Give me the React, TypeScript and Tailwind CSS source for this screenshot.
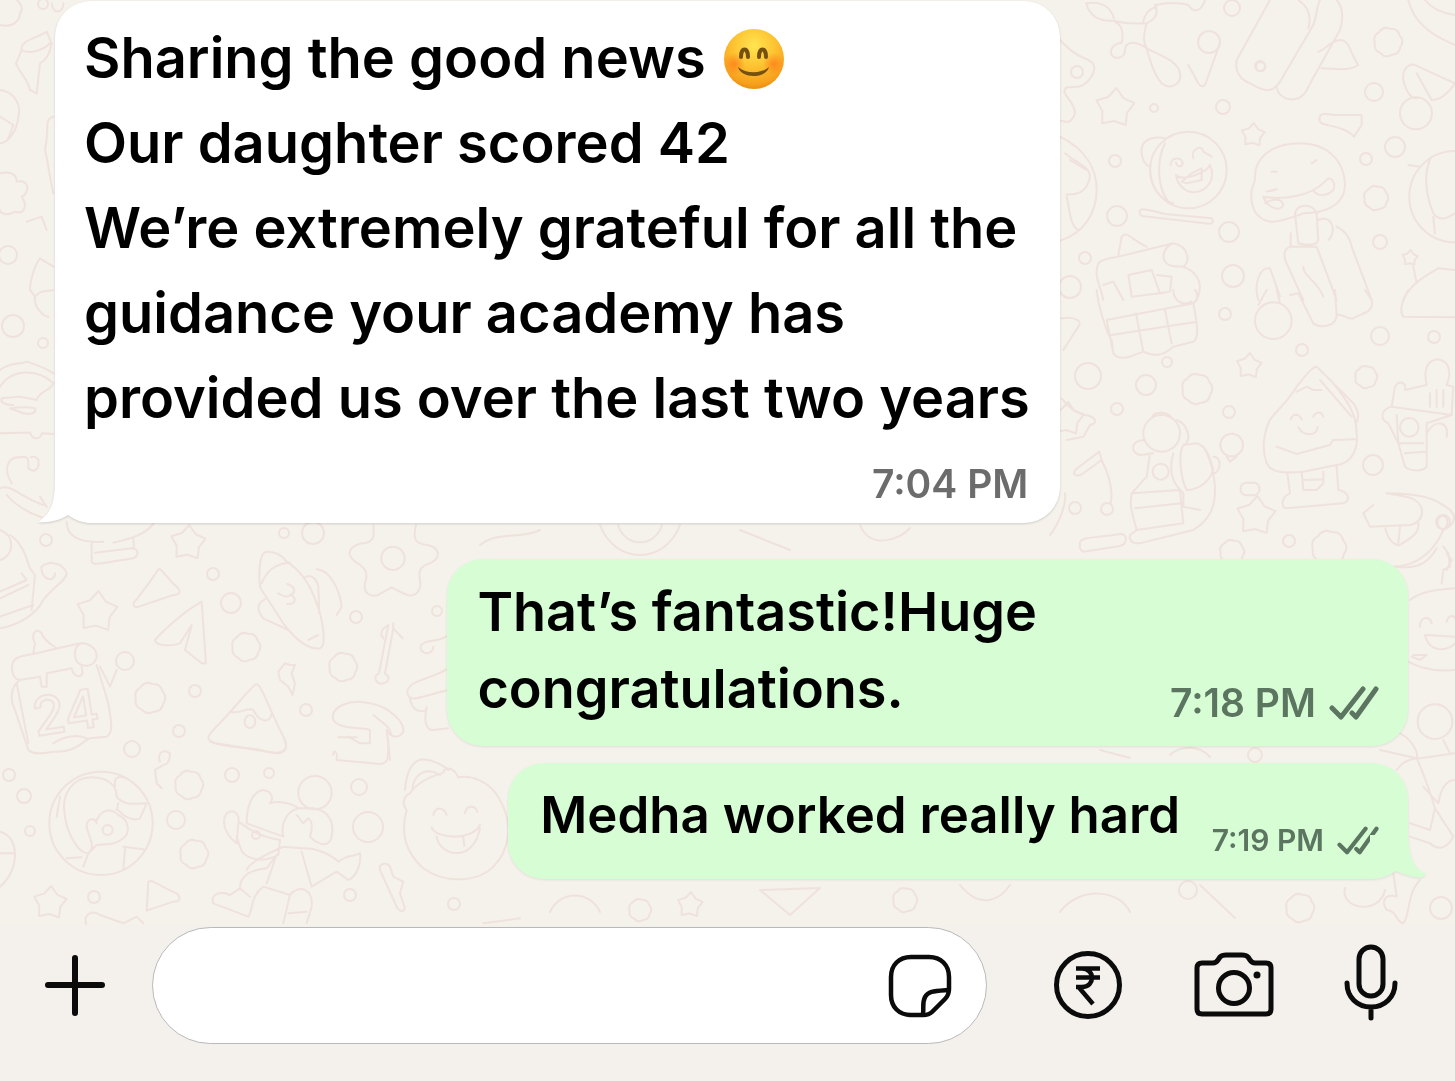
import type { ReactNode } from "react";

// small round doodles: [x, y, radius]
const dots: [number, number, number][] = [
  [1232, 8, 8], [1209, 42, 11], [1374, 92, 9], [1395, 147, 10], [1117, 216, 10],
  [1229, 232, 10], [1233, 276, 11], [1154, 108, 4], [1223, 107, 7], [1380, 242, 7],
  [1366, 159, 6], [1115, 161, 6], [1085, 258, 6], [1070, 287, 11], [1260, 66, 5],
  [1077, 72, 6], [1225, 314, 6], [1380, 336, 9], [1434, 337, 6], [1302, 350, 6],
  [1088, 376, 13], [1146, 385, 10], [1167, 362, 5], [1117, 409, 6], [1229, 412, 6],
  [1373, 465, 10], [1289, 541, 6], [1075, 508, 6], [1107, 509, 6], [1443, 522, 7],
  [46, 540, 6], [213, 574, 6], [231, 603, 10], [284, 533, 5], [313, 533, 11],
  [356, 617, 6], [195, 691, 6], [306, 710, 6], [179, 731, 6], [132, 749, 8],
  [125, 661, 9], [437, 611, 5], [9, 775, 6], [24, 796, 7], [30, 831, 5],
  [176, 820, 9], [232, 775, 7], [269, 773, 5], [359, 787, 8], [94, 897, 6],
  [350, 895, 6], [454, 904, 6], [8, 255, 9], [13, 326, 11], [43, 343, 5],
  [43, 4, 5], [368, 827, 15], [1441, 908, 11], [1255, 755, 7], [1188, 890, 9],
];

// bumpy, flower-like dots: [x, y, radius]
const blobs: [number, number, number][] = [
  [1388, 42, 14], [1376, 198, 12], [1197, 389, 15], [1366, 377, 11], [246, 647, 14],
  [150, 698, 15], [343, 667, 14], [189, 785, 14], [194, 854, 14], [1329, 548, 17],
  [1232, 552, 12], [640, 910, 11], [905, 900, 12], [1300, 908, 14],
];

// five-pointed stars: [x, y, radius]
const stars: [number, number, number][] = [
  [97, 612, 21], [50, 903, 17], [1115, 108, 20], [1253, 135, 12], [1249, 366, 13],
  [188, 543, 18], [1256, 516, 20], [1410, 258, 8], [690, 905, 13], [1067, 419, 17],
];

const blobPath = (cx: number, cy: number, r: number) => {
  const n = 7;
  const pt = (i: number, k: number) => {
    const a = (i / n) * Math.PI * 2 - 1.4;
    return `${cx + Math.cos(a) * r * k} ${cy + Math.sin(a) * r * k}`;
  };
  let d = `M${pt(0, 0.95)}`;
  for (let i = 0; i < n; i++) {
    d += `Q${pt(i + 0.5, 1.2)} ${pt(i + 1, 0.95)}`;
  }
  return d + "Z";
};

const starPath = (cx: number, cy: number, r: number) => {
  const pts = Array.from({ length: 10 }, (_, i) => {
    const a = (i / 10) * Math.PI * 2 - 1.5;
    const k = i % 2 ? 0.65 : 1;
    return `${cx + Math.cos(a) * r * k} ${cy + Math.sin(a) * r * k}`;
  });
  return `M${pts.join("L")}Z`;
};

function Wallpaper() {
  return (
    <svg
      className="absolute inset-0 h-full w-full"
      viewBox="0 0 1455 925"
      preserveAspectRatio="xMinYMin slice"
      fill="none"
      stroke="#efe2dc"
      strokeWidth="2"
      strokeLinecap="round"
      strokeLinejoin="round"
      aria-hidden="true"
    >
      {dots.map(([x, y, r]) => (
        <circle key={`${x}-${y}`} cx={x} cy={y} r={r} />
      ))}
      {blobs.map(([x, y, r]) => (
        <path key={`${x}-${y}`} d={blobPath(x, y, r)} />
      ))}
      {stars.map(([x, y, r]) => (
        <path key={`${x}-${y}`} d={starPath(x, y, r)} />
      ))}

      {/* top right: bone, phone, coin face, mushroom, globe */}
      <g transform="translate(1050 0) scale(.3333)" strokeWidth="6">
        <path d="M108 10C120 50 150 65 190 62C215 75 222 90 215 128C190 130 178 150 185 165C195 180 225 175 225 150C225 125 255 120 290 145C300 180 310 220 335 250C360 270 395 255 390 220C385 185 340 170 290 145C275 120 285 90 290 70C320 55 325 40 315 15C350 8 390 8 415 15C430 40 455 35 465 0M190 62C240 75 270 70 290 70M110 10C140 5 180 10 192 55M280 65C285 40 300 25 320 20" />
        <path d="M415 195L445 250C452 262 462 262 467 250L508 135M30 120C60 150 75 165 115 180C135 190 140 210 120 235C105 262 80 262 50 262C25 280 75 300 75 340C65 370 50 368 32 362" />
        <path d="M660 0L560 180C555 210 565 235 600 250C650 280 670 275 690 245L790 75C800 50 800 20 810 0M745 0C775 20 785 50 775 85M680 262C685 290 715 305 745 295C770 285 775 255 800 215L870 90C880 60 880 20 860 0M805 155C825 150 845 120 870 120C900 120 900 160 925 195C900 215 850 205 815 205" />
        <circle cx="632" cy="200" r="14" />
        <path d="M1075 0C1090 60 1130 100 1215 135M1125 0C1145 25 1170 40 1215 45M1060 240C1055 200 1085 185 1105 200L1215 250C1195 280 1170 300 1145 300L1100 220M1060 240C1070 280 1085 295 1100 295" />
        <circle cx="1098" cy="340" r="48" />
        <path d="M810 350C810 340 830 340 850 345L935 345L935 375L912 410C890 385 850 380 820 372C808 368 806 360 810 350Z" />
        <circle cx="415" cy="510" r="115" />
        <path d="M345 415C300 405 270 425 275 460C280 490 290 495 300 500C300 560 330 600 370 610M345 430C320 480 320 560 355 605M362 495C362 470 398 470 398 490C395 505 380 500 378 488M430 475C420 450 455 430 460 455L485 470M378 525C395 545 470 520 480 495C500 540 470 575 430 577C400 575 382 550 378 525ZM395 545L425 520L455 505L455 540L410 550Z" />
        <path d="M275 628C300 628 330 640 345 642L485 655C495 665 485 675 465 670L275 648C265 640 268 630 275 628Z" />
        <path d="M615 540C610 470 670 430 750 430C830 430 885 480 885 560C880 620 820 640 760 640C730 650 690 668 660 665C610 655 600 610 605 570ZM640 590C650 620 690 640 700 615C695 590 660 600 645 610M640 590C700 600 780 590 825 545C840 520 860 550 850 570C830 590 800 590 790 570M785 490L800 480M665 515L680 515M650 575L680 568" />
        <path d="M735 640C740 610 790 610 800 640L805 720C800 740 760 735 745 730ZM805 660C850 640 860 700 835 720M722 700L722 740C700 745 700 770 710 790L760 900M722 740L800 740L860 900M860 680C880 690 900 710 905 740L965 900M760 800C760 830 800 840 820 890" />
        <path d="M30 410C110 450 140 510 140 570C140 640 100 700 30 722M45 460C80 490 120 500 120 530C110 580 80 585 50 583M60 480L110 510M50 590C60 630 60 680 85 690" />
        <circle cx="1215" cy="590" r="137" />
        <path d="M1140 480C1120 530 1130 590 1150 640C1170 670 1200 650 1215 640M1075 495L1110 500M1150 650L1155 700" />
        <path d="M205 765L215 710C230 690 245 720 290 740M145 790C160 775 180 775 205 770L370 730C420 740 420 790 400 800C370 800 340 800 340 765C345 745 355 735 370 730M145 790C130 830 150 850 160 900M235 825L305 810L330 880L245 890ZM320 825L365 830L360 875L330 880M400 800C450 820 460 860 440 900M160 855L190 845L220 900" />
        <path d="M625 900C610 850 630 800 660 805L690 890M1060 900C1080 850 1140 820 1165 805L1215 810M1090 800L1100 850" />
      </g>

      {/* right: calendar grid, backpack kid, rice ball, robot */}
      <g transform="translate(1050 290) scale(.3333)" strokeWidth="6">
        <path d="M140 0C145 50 170 130 185 150L190 190C200 205 220 205 240 200L280 185C310 200 340 200 370 170L430 155C450 145 440 90 430 40L170 90L190 190M185 135L440 95M258 70L280 185M345 60L365 160M430 40C445 30 445 10 435 0M370 0C370 30 395 50 425 35" />
        <circle cx="670" cy="92" r="55" />
        <path d="M625 45L650 0M690 40L680 0M720 15L745 10L790 100C810 115 860 110 860 75C880 70 890 90 910 85C930 70 975 70 965 30L945 0M860 75L855 0M1075 0C1060 30 1045 60 1060 80L1215 82M35 85C70 80 100 90 85 110L40 180" />
        <path d="M800 230C790 230 780 240 740 290C710 340 680 360 660 390C640 430 635 480 650 520C665 550 700 550 760 545L860 525C910 520 925 470 920 430C920 370 890 330 850 280ZM800 230L910 340C925 360 930 380 918 400M810 270L905 380M740 305L770 290L790 300L815 300M722 388C730 370 745 370 755 388M790 380C800 362 815 365 820 380M745 412C760 440 800 440 803 412M680 470L740 492L840 465L850 450L915 448" />
        <path d="M712 548L720 610C695 620 690 650 710 655L880 640C905 630 895 605 865 600L860 530M755 545L760 600L800 600L820 580L820 545M760 570L820 568" />
        <circle cx="335" cy="430" r="55" />
        <path d="M305 385C310 360 360 365 365 385M285 450C240 450 240 490 270 495L310 490M380 390C410 400 430 450 400 465C385 490 390 560 410 600C450 600 480 570 490 540C480 500 470 470 440 460L400 465M300 490L290 560L245 610C240 640 240 650 260 720L240 735C235 760 260 765 290 755L430 720C480 690 495 650 495 600C495 560 480 500 460 470M245 610L390 600L400 700L260 720M255 655L395 640M370 490C350 560 380 590 400 610L400 650L450 660M490 500C520 500 510 550 490 550" />
        <circle cx="332" cy="545" r="24" />
        <circle cx="545" cy="465" r="34" />
        <path d="M530 500L540 515L560 500M75 540C65 560 85 560 100 550L155 510L148 485L75 540M155 510C180 560 190 600 182 640M35 325C60 360 80 365 105 375C140 380 145 400 120 405L100 440L50 450M90 765C85 740 120 745 215 732C235 735 230 765 210 768L100 785C90 780 88 770 90 765Z" />
        <rect x="572" y="578" width="56" height="38" rx="17" />
        <path d="M1025 350L1035 290C1045 270 1070 275 1065 300L1130 285C1120 240 1130 210 1165 208C1200 215 1205 250 1190 285L1210 290L1205 375L1025 350C990 360 990 390 1015 400L1045 460L1065 530C1080 545 1120 545 1130 530L1130 400L1205 375M1040 375L1045 460L1120 460M1130 430C1160 380 1200 400 1190 440M1065 490L1125 485M1140 310L1140 350M1160 300L1160 350M1180 300L1180 350" />
        <circle cx="1078" cy="412" r="28" />
        <path d="M970 645L940 670L960 710L1080 705C1120 700 1140 640 1070 620L1010 610C1090 610 1140 620 1170 640C1230 670 1220 700 1180 720C1160 770 1110 830 1030 830M1005 710C1010 740 1030 770 1050 765C1080 745 1110 730 1105 700M1050 710L1045 760M1190 790L1205 810L1190 840" />
        <ellipse cx="1178" cy="697" rx="15" ry="20" />
        <path d="M45 610C50 650 20 710 0 735" />
      </g>

      {/* left: 24 calendar, paper plane, rocket, gear flower, pizza */}
      <g transform="translate(0 510) scale(.3333)" strokeWidth="6">
        <path d="M200 35C200 80 240 100 310 95M340 98C400 85 440 70 460 40M275 95L275 155C280 168 300 160 400 145C420 135 415 115 395 115L285 128M400 85L402 115" />
        <path d="M0 60C50 80 40 140 0 150M30 75C70 100 80 150 90 175L105 195L95 300M0 245L80 210L65 190M0 320L100 285M0 355C60 345 110 310 130 270C160 230 200 210 200 190C190 160 150 150 125 170C120 210 165 220 165 190M0 265L85 225" />
        <path d="M475 178C485 172 495 200 530 230C545 245 540 255 520 255L410 292C395 290 400 275 410 268L450 215ZM605 275C560 300 500 350 465 390C465 410 520 408 540 400L575 345L555 420L605 460L618 460Z" />
        <path d="M780 230C775 180 780 125 800 125C830 125 850 140 860 155C900 180 930 220 950 280C970 330 980 410 960 415C920 420 880 380 850 340L785 240ZM785 220C800 180 830 160 870 158M795 268C770 280 770 300 790 325L865 360M912 205C925 190 950 200 955 230L958 310M950 178C990 180 1020 240 1025 290L1010 315M925 390L955 375" />
        <path d="M862 222C888 230 888 250 870 255M835 250C850 262 865 262 870 255C892 262 888 285 862 282" />
        <path d="M1120 45C1125 80 1120 100 1085 100C1050 110 1035 130 1065 155C1100 175 1105 190 1095 220C1090 250 1110 262 1135 255L1175 232L1220 255C1250 262 1265 240 1260 210C1255 180 1260 170 1290 160C1330 140 1315 110 1280 105C1240 100 1240 80 1248 45" />
        <circle cx="1179" cy="145" r="35" />
        <path d="M1165 345L1137 490C1115 500 1130 525 1150 520C1170 515 1170 500 1155 490L1180 355L1208 385M1165 345C1140 360 1140 375 1150 385M1180 340L1180 360" />
        <path d="M765 525C740 545 700 600 640 660C615 685 625 695 650 700L830 730C860 730 865 710 850 680C820 620 800 570 785 540C775 522 770 520 765 525ZM690 605C720 615 740 590 760 600C780 640 810 640 815 610" />
        <ellipse cx="750" cy="635" rx="16" ry="19" />
        <path d="M870 465L885 465L875 490L885 520L878 555L865 530L840 510L835 485L855 460Z" />
        <path d="M40 455C45 440 70 438 100 432L230 402C260 395 290 410 290 440C285 470 250 475 230 455C220 430 225 410 240 402M40 455C30 480 40 510 60 510L120 500L125 530L140 530L140 490L215 475C220 500 240 505 248 490L245 470M60 510C30 530 30 570 45 600L85 720C100 735 130 730 160 725C230 730 250 690 270 685L320 680C340 670 335 640 325 580L290 465M50 520L85 700M160 700C190 680 230 670 260 685M100 430L105 400C90 370 110 350 125 370C130 390 150 400 170 415M300 470L330 530L350 480" />
        <path d="M1000 630C990 590 1050 565 1110 580C1170 590 1215 640 1210 665C1195 690 1170 680 1160 660L1170 750M1000 630C1020 660 1080 650 1110 660L1110 700L1080 700L1045 680M1015 682L1070 682M1120 615C1150 640 1170 650 1175 675M1345 475C1290 510 1220 510 1222 550C1230 580 1260 560 1345 540M1230 565C1235 600 1260 610 1280 600M1280 590C1270 640 1280 660 1300 660L1345 655M1345 375C1320 400 1260 385 1262 415C1270 440 1300 430 1300 410" />
        <text x="95" y="665" transform="rotate(-9 190 600)" fontSize="160" className="font-['Inter',sans-serif] font-medium">24</text>
      </g>

      {/* bottom left: globe, running kid, laughing face */}
      <g transform="translate(0 740) scale(.3333)" strokeWidth="6">
        <circle cx="303" cy="250" r="155" />
        <path d="M195 230C180 160 220 110 280 112C330 115 350 140 350 170C370 200 420 190 440 190L420 235C400 245 370 230 355 210M195 230C200 270 230 340 265 340C290 320 265 290 260 260C260 230 290 235 290 250M290 240C310 200 340 210 355 225C390 240 390 280 370 295C340 320 310 310 290 315L265 340L250 380M370 320L430 328M345 140C340 110 360 105 380 115M355 190L350 210M200 355L245 352M375 325L370 390M180 170L170 230" />
        <circle cx="323" cy="270" r="15" />
        <path d="M480 65C470 40 490 25 510 40C510 65 500 75 490 75L465 90L470 130L485 145M445 425C455 415 480 440 530 460C545 475 540 485 520 485L440 512ZM258 552C250 520 280 510 300 525L370 550L410 530L430 550" />
        <circle cx="945" cy="158" r="50" />
        <path d="M740 250C740 200 755 155 790 150C820 155 820 180 810 190C830 180 880 190 895 205C860 215 840 250 850 290L740 250ZM895 205L940 205C980 210 1005 240 995 290C990 320 960 320 930 290C940 260 935 240 925 235L910 250L890 225M715 250C720 220 700 205 680 220C665 240 670 280 710 310L715 250C730 240 730 280 840 300L835 345C790 370 730 360 720 320L710 290M740 390C750 360 830 330 850 320L905 325C950 320 1000 350 1015 365C1040 345 1060 350 1080 340C1085 370 1070 410 1045 420L1010 395L935 440L905 335M720 445C720 400 760 390 800 385L830 345M720 445L690 465C660 450 630 465 640 490L745 530C760 510 750 470 790 440L870 465L850 550M800 430L830 345M870 465C900 430 940 450 935 500L920 550M865 520L920 515M720 445L750 470" />
        <circle cx="768" cy="285" r="12" />
        <path d="M1140 390C1135 370 1160 365 1170 380L1180 410L1210 425L1200 460L1215 505C1210 518 1198 515 1190 500Z" />
        <path d="M1230 160C1210 170 1205 190 1220 210C1200 280 1220 340 1270 385C1330 430 1430 430 1480 380C1530 330 1540 250 1500 180C1470 120 1410 105 1375 112C1360 80 1335 80 1330 98C1290 110 1250 130 1230 160ZM1215 150C1220 90 1240 60 1270 58C1300 60 1330 75 1345 90M1237 150C1240 100 1280 80 1320 105M1300 225C1305 200 1330 198 1340 225M1395 220C1400 195 1425 195 1432 215M1295 262C1310 300 1420 300 1440 255M1310 290C1320 350 1420 370 1440 265M1390 290L1393 318" />
        <path d="M0 275C60 290 60 390 0 440M0 340L40 340M1000 45C1000 25 1015 35 1010 60L1140 72C1165 70 1165 60 1165 0M630 5C690 30 740 15 800 35C850 45 865 30 855 0M1450 550L1560 535" />
      </g>

      {/* far left edge */}
      <g transform="scale(.3333)" strokeWidth="6">
        <path d="M0 75C40 85 60 60 60 40C70 30 65 10 50 0M65 150C60 120 110 115 140 95L155 130C150 160 140 180 120 190L110 280L90 270C85 240 60 220 48 190L65 150C90 165 130 150 150 130M155 10C160 45 190 40 190 10M0 270C40 275 65 310 55 350C50 400 20 430 0 430M0 350L40 375L25 415M0 520C40 510 50 530 50 545C90 535 90 580 65 590C85 620 70 645 45 635C20 650 0 640 0 630M160 350C130 360 150 380 135 450C145 490 150 540 160 580M80 665L125 650L140 690M160 800L120 775C100 800 90 850 90 870L105 890C100 920 130 950 145 950M105 890C120 870 140 875 160 870" />
        <path d="M0 1110C30 1085 60 1095 80 1085C110 1095 130 1100 160 1120M0 1160C40 1100 120 1110 160 1150C150 1175 120 1170 110 1200L60 1190L5 1195C0 1210 20 1215 40 1215M30 1225C50 1222 80 1220 105 1225C110 1240 90 1245 70 1240ZM0 1300L90 1298C100 1325 125 1315 125 1300L160 1302" />
        <path d="M35 1450C10 1410 20 1370 60 1372C90 1365 85 1385 85 1405C100 1420 120 1410 115 1380C110 1370 100 1368 92 1372M0 1465C30 1450 60 1490 130 1515M20 1485C50 1520 90 1540 125 1552M120 1490L140 1520" />
      </g>

      {/* right edge beside the replies, and the strips between bubbles */}
      <g transform="translate(1380 540) scale(.3333)" strokeWidth="6">
        <path d="M90 180C120 155 160 150 225 145M85 365C120 385 170 395 225 390M120 260C120 230 150 225 155 250M200 245C205 225 220 225 225 235M135 285C150 345 210 330 225 310M140 285L225 290M100 345L140 345L120 360L95 350M50 80C120 90 150 60 170 25M185 130L190 90L210 80L205 40L190 20" />
        <circle cx="165" cy="545" r="52" />
        <path d="M60 580C100 600 115 640 110 655L0 630M50 690C70 660 100 655 120 655L225 640M110 655C140 720 150 760 165 805L150 870L90 850M225 720C190 720 180 760 175 790L130 740M165 805L220 890C200 930 170 930 150 910L90 890M40 1000L50 1070C20 1060 0 1080 20 1110C50 1110 50 1150 70 1150C90 1130 80 1060 120 1020M190 600L210 640" />
      </g>
      <path d="M600 525C615 565 665 565 680 525M618 525C625 548 655 548 662 525M480 545C500 530 520 540 540 530M740 530L790 550M860 525C870 550 900 540 910 528M550 912C560 890 590 890 600 912M760 890L790 915L820 888ZM960 885C980 910 1000 900 1010 885M1060 912C1080 885 1120 890 1130 912M1170 755C1180 745 1200 745 1210 757M1100 750L1130 758M1200 885L1235 918M1345 888C1340 910 1380 915 1385 890" />
    </svg>
  );
}

function SmilingFace() {
  return (
    <svg className="ml-[17px] h-[62px] w-[62px]" viewBox="0 0 62 62" role="img" aria-label="smiling face">
      <defs>
        <radialGradient id="face" cx="50%" cy="28%" r="75%">
          <stop offset="0" stopColor="#ffe552" />
          <stop offset="0.5" stopColor="#fdc02f" />
          <stop offset="0.85" stopColor="#f6a01c" />
          <stop offset="1" stopColor="#e8860c" />
        </radialGradient>
        <radialGradient id="cheek">
          <stop offset="0" stopColor="#ff7a1a" stopOpacity="0.75" />
          <stop offset="1" stopColor="#ff7a1a" stopOpacity="0" />
        </radialGradient>
      </defs>
      <circle cx="31" cy="31" r="30" fill="url(#face)" />
      <circle cx="11" cy="36" r="11" fill="url(#cheek)" />
      <circle cx="51" cy="36" r="11" fill="url(#cheek)" />
      <g fill="none" stroke="#75500f" strokeWidth="4" strokeLinecap="round">
        <path d="M18 29C18 19 25 19 25 29" />
        <path d="M36 29C36 19 43 19 43 29" />
      </g>
      <path d="M15 39C23 46 38 46 46 39C43 51 18 51 15 39Z" fill="#75500f" />
    </svg>
  );
}

function Ticks({ className }: { className: string }) {
  return (
    <svg
      className={className}
      viewBox="0 0 50 34"
      fill="none"
      stroke="#5c7560"
      strokeWidth="5"
      strokeLinecap="round"
      strokeLinejoin="round"
      role="img"
      aria-label="Delivered"
    >
      <path d="M3 22L12 31L34 3" />
      <path d="M23 27L27 31L47 3" />
    </svg>
  );
}

function IconButton({ label, className, children }: { label: string; className: string; children: ReactNode }) {
  return (
    <button type="button" aria-label={label} className={`shrink-0 ${className}`}>
      {children}
    </button>
  );
}

export default function App() {
  return (
    <div className="flex min-h-screen flex-col bg-[#f5f1eb] font-['Inter','Liberation_Sans',sans-serif] text-black">

      <main className="relative flex-1 overflow-hidden">
        <Wallpaper />

        <div className="relative flex flex-col pt-px pr-[47px] pb-[46px] pl-[55px]">

          <article className="relative w-[74.3%] rounded-[36px] bg-white pt-[15px] pr-[32px] pb-[15px] pl-[29px] drop-shadow-[0_1px_1px_rgba(0,0,0,0.15)]">
            <div className="text-[56px] leading-[85px] font-semibold whitespace-nowrap">
              <p className="flex items-center">
                Sharing the good news
                <SmilingFace />
              </p>
              <p>Our daughter scored 42</p>
              <p>We’re extremely grateful for all the</p>
              <p>guidance your academy has</p>
              <p>provided us over the last two years</p>
            </div>
            <time className="mt-[19px] block text-right text-[39px] leading-[48px] font-semibold text-[#6c6c6c]">7:04 PM</time>
            <svg className="absolute bottom-0 -left-[17px] h-[44px] w-[56px]" viewBox="0 0 56 44" fill="#ffffff" aria-hidden="true">
              <path d="M17 0C17 24 13 35 0 43C12 44 22 41 30 36C38 40 42 44 56 44L56 0Z" />
            </svg>
          </article>

          <article className="mt-[36px] flex w-[71%] items-end justify-between self-end rounded-[36px] bg-[#d7fdd5] pt-[14px] pr-[29px] pb-[19px] pl-[30px] drop-shadow-[0_1px_1px_rgba(0,0,0,0.08)]">
            <div className="text-[54px] leading-[77px] font-semibold whitespace-nowrap">
              <p>That’s fantastic!Huge</p>
              <p>congratulations.</p>
            </div>
            <div className="flex items-center gap-[13px]">
              <time className="text-[39px] leading-[48px] font-semibold whitespace-nowrap text-[#5c7560]">7:18 PM</time>
              <Ticks className="h-[34px] w-[50px]" />
            </div>
          </article>

          <article className="relative mt-[17px] flex w-[66.5%] items-end justify-between self-end rounded-[36px] bg-[#d7fdd5] pt-[9px] pr-[29px] pb-[22px] pl-[32px] drop-shadow-[0_1px_1px_rgba(0,0,0,0.08)]">
            <p className="text-[51px] leading-[85px] font-semibold whitespace-nowrap">Medha worked really hard</p>
            <div className="flex items-center gap-[13px]">
              <time className="text-[30px] leading-[34px] font-semibold whitespace-nowrap text-[#5c7560]">7:19 PM</time>
              <Ticks className="h-[29px] w-[42px]" />
            </div>
            <svg className="absolute -right-[18px] bottom-0 h-[44px] w-[56px]" viewBox="0 0 56 44" fill="#d7fdd5" aria-hidden="true">
              <path d="M38 0C39 20 43 34 55 38C57 44 44 44 26 36C18 41 12 43 0 44L0 0Z" />
            </svg>
          </article>

        </div>
      </main>

      <footer className="flex items-center bg-[#f4f1ed] pt-[2px] pr-[57px] pb-[37px] pl-[43px]">
        <IconButton label="Attach" className="h-[64px] w-[64px]">
          <svg viewBox="0 0 64 64" fill="none" stroke="#0b0b0b" strokeWidth="6" strokeLinecap="round">
            <path d="M32 4V59M5 31H59" />
          </svg>
        </IconButton>

        <div className="ml-[45px] flex h-[117px] min-w-0 flex-1 items-center rounded-full border border-[#b9b9b9] bg-white pr-[33px] pl-[40px]">
          <input
            type="text"
            aria-label="Message"
            className="h-full min-w-0 flex-1 bg-transparent text-[54px] outline-none"
          />
          <IconButton label="Stickers" className="h-[66px] w-[66px]">
            <svg viewBox="0 0 66 66" fill="none" stroke="#0b0b0b" strokeWidth="4.5" strokeLinecap="round" strokeLinejoin="round">
              <path d="M24 4H42C54 4 62 12 62 24V36C62 40 61 43 58 46L45 59C42 62 39 62 36 62H24C12 62 4 54 4 42V24C4 12 12 4 24 4Z" />
              <path d="M36 61C37 54 35 50 38 44C41 38 47 38 61 37" />
            </svg>
          </IconButton>
        </div>

        <div className="ml-[65px] flex items-center gap-[65px]">
          <IconButton label="Payment" className="h-[72px] w-[72px]">
            <svg viewBox="0 0 72 72" fill="none" stroke="#0b0b0b">
              <circle cx="36" cy="35" r="31.5" strokeWidth="5" />
              <path d="M24 18.5H48M24 27.5H48M24 37H30C37 37 40 32 40 27.5C40 23 36 18.5 30 18.5M26.5 37L41 54" strokeWidth="4.5" />
            </svg>
          </IconButton>
          <IconButton label="Camera" className="h-[72px] w-[90px]">
            <svg viewBox="0 0 90 72" fill="none" stroke="#0b0b0b" strokeWidth="5" strokeLinejoin="round">
              <path d="M8 18Q8 13 13 13H24Q27 13 29 10L31 7Q33 5 37 5H53Q57 5 59 7L61 10Q63 13 66 13H77Q82 13 82 18V59Q82 64 77 64H13Q8 64 8 59Z" />
              <circle cx="45" cy="38" r="15.5" />
              <circle cx="68" cy="25" r="3.5" fill="#0b0b0b" stroke="none" />
            </svg>
          </IconButton>
          <IconButton label="Voice message" className="h-[84px] w-[54px]">
            <svg viewBox="0 0 54 84" fill="none" stroke="#0b0b0b" strokeWidth="5" strokeLinecap="round">
              <rect x="15" y="3" width="24" height="49" rx="12" />
              <path d="M3 39C3 53 13 63 27 63C41 63 51 53 51 39M27 64V74" />
            </svg>
          </IconButton>
        </div>
      </footer>

    </div>
  );
}
